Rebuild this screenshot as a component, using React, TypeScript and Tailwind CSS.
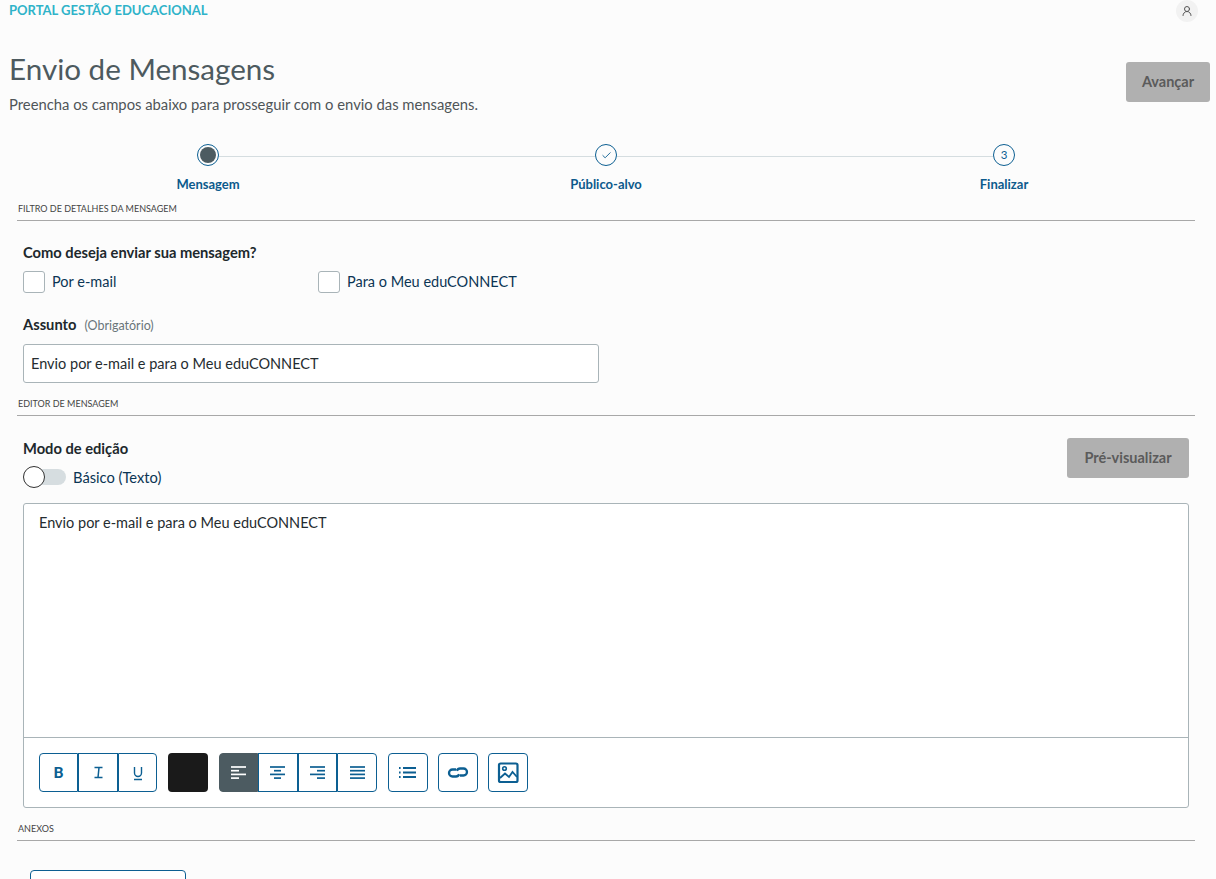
import { Check, UserRound } from "lucide-react";
import type { ReactNode } from "react";

const font = { fontFamily: 'Lato, "Noto Sans", sans-serif' };

function SectionTitle({ children }: { children: ReactNode }) {
  return (
    <div className="ml-[17px] mr-[21px] border-b border-[#a8a8a8] pb-[5px] pl-px text-[9px] leading-[12px] text-[#444]">
      {children}
    </div>
  );
}

function Step({ label, children, line }: { label: string; children: ReactNode; line?: boolean }) {
  return (
    <div className="relative flex w-[398px] flex-col items-center">
      {line && <div className="absolute left-1/2 top-[12px] h-px w-[398px] bg-[#d5dde0]" />}
      <div className="relative z-10 grid h-[22px] w-[22px] place-items-center rounded-full border border-[#0c5f92] bg-[#fcfcfc] text-[11.5px] text-[#0c5f92]">
        {children}
      </div>
      <div className="mt-[10px] text-[13px] font-bold leading-[16px] text-[#0c5a8c]">{label}</div>
    </div>
  );
}

function CheckItem({ label, className }: { label: string; className: string }) {
  return (
    <label className={`flex items-center gap-[7px] ${className}`}>
      <span className="h-[22px] w-[22px] rounded-[3px] border border-[#a9b4b8] bg-white" />
      <span className="text-[14.5px] leading-[20px] text-[#0b3554]">{label}</span>
    </label>
  );
}

function ToolBtn({ children, className = "w-[40px]" }: { children: ReactNode; className?: string }) {
  return (
    <button className={`grid h-[39px] place-items-center border border-[#0c5f92] bg-white text-[#0c5f92] ${className}`}>
      {children}
    </button>
  );
}

// toolbar glyphs share one 40x39 grid so they sit where the reference has them
function Glyph({ children }: { children: ReactNode }) {
  return (
    <svg className="-m-px" width="40" height="39" viewBox="0 0 40 39" fill="none" stroke="currentColor" strokeWidth="1.7">
      {children}
    </svg>
  );
}

function Lines({ rows }: { rows: [number, number][] }) {
  return (
    <Glyph>
      {rows.map(([x1, x2], i) => (
        <line key={i} x1={x1} x2={x2} y1={14 + i * 3.7} y2={14 + i * 3.7} />
      ))}
    </Glyph>
  );
}

export default function App() {
  return (
    <div className="h-[879px] overflow-hidden bg-[#fcfcfc]" style={font}>
      <header className="flex h-[22px] items-center justify-between pl-[9px] pr-[18px]">
        <span className="text-[13px] font-bold text-[#2fb3c9]">PORTAL GESTÃO EDUCACIONAL</span>
        <span className="grid h-[22px] w-[22px] place-items-center rounded-full bg-[#f2f2f2] text-[#555]">
          <UserRound size={12} />
        </span>
      </header>

      <div className="mt-[29px] flex items-start justify-between pl-[9px] pr-[6px]">
        <div>
          <h1 className="text-[29.6px] leading-[36px] text-[#4d5a5f]">Envio de Mensagens</h1>
          <p className="mt-[7px] text-[14.8px] leading-[20px] text-[#4f5558]">
            Preencha os campos abaixo para prosseguir com o envio das mensagens.
          </p>
        </div>
        <button className="mt-[11px] h-[40px] w-[84px] rounded-[3px] bg-[#b0b0b0] text-[14.5px] font-bold text-[#5b5b5b]">
          Avançar
        </button>
      </div>

      <div className="mt-[30px] flex pl-[9px]">
        <Step label="Mensagem" line>
          <span className="h-[16px] w-[16px] rounded-full bg-[#4c5b61]" />
        </Step>
        <Step label="Público-alvo" line>
          <Check size={11} strokeWidth={2} />
        </Step>
        <Step label="Finalizar">3</Step>
      </div>

      <div className="mt-[11px]">
        <SectionTitle>FILTRO DE DETALHES DA MENSAGEM</SectionTitle>
      </div>

      <div className="pl-[23px]">
        <div className="mt-[21px] text-[14.7px] font-bold leading-[20px] text-[#20282c]">Como deseja enviar sua mensagem?</div>
        <div className="mt-[9px] flex">
          <CheckItem label="Por e-mail" className="w-[295px]" />
          <CheckItem label="Para o Meu eduCONNECT" className="" />
        </div>
        <div className="mt-[21px] flex items-baseline gap-[8px] leading-[20px]">
          <span className="text-[14.7px] font-bold text-[#20282c]">Assunto</span>
          <span className="text-[12.5px] text-[#69757a]">(Obrigatório)</span>
        </div>
        <div className="mt-[8px] flex h-[39px] w-[576px] items-center rounded-[3px] border border-[#a9b4b8] bg-white pl-[7px] text-[14.5px] text-[#252c30]">
          Envio por e-mail e para o Meu eduCONNECT
        </div>
      </div>

      <div className="mt-[15px]">
        <SectionTitle>EDITOR DE MENSAGEM</SectionTitle>
      </div>

      <div className="mt-[22px] flex items-start justify-between pl-[23px] pr-[27px]">
        <div>
          <div className="text-[14.7px] font-bold leading-[20px] text-[#20282c]">Modo de edição</div>
          <div className="mt-[8px] flex h-[22px] items-center gap-[7px]">
            <span className="relative h-[16px] w-[43px] rounded-full bg-[#d6dde0]">
              <span className="absolute left-0 top-[-3px] h-[22px] w-[22px] rounded-full border border-[#333] bg-white" />
            </span>
            <span className="text-[14.7px] leading-[20px] text-[#0b3554]">Básico (Texto)</span>
          </div>
        </div>
        <button className="h-[40px] w-[122px] rounded-[3px] bg-[#b0b0b0] text-[14.5px] font-bold text-[#5b5b5b]">
          Pré-visualizar
        </button>
      </div>

      <div className="ml-[23px] mr-[27px] mt-[15px] h-[305px] rounded-[3px] border border-[#a9b4b8] bg-white">
        <div className="h-[234px] border-b border-[#a9b4b8] pl-[15px] pt-[9px] text-[14.5px] leading-[20px] text-[#252c30]">
          Envio por e-mail e para o Meu eduCONNECT
        </div>
        <div className="flex pl-[15px] pt-[15px]">
          <div className="flex">
            <ToolBtn className="w-[39px] rounded-l-[4px] text-[15px] font-black">B</ToolBtn>
            <ToolBtn className="w-[40px]">
              <Glyph>
                <path d="M16.5 14.5h8M16.5 24.5h8M21 14.5l-1 10" strokeWidth="1.5" />
              </Glyph>
            </ToolBtn>
            <ToolBtn className="w-[39px] rounded-r-[4px]">
              <Glyph>
                <path d="M16.5 14v6a3.5 3.5 0 0 0 7 0v-6M16 26.5h8" strokeWidth="1.4" />
              </Glyph>
            </ToolBtn>
          </div>
          <div className="ml-[11px] h-[39px] w-[40px] rounded-[4px] bg-[#1a1a1a]" />
          <div className="ml-[11px] flex">
            <ToolBtn className="w-[39px] rounded-l-[4px] !border-[#4c5b61] !bg-[#4c5b61] !text-white">
              <Lines rows={[[12, 27], [12, 20], [12, 27], [12, 20]]} />
            </ToolBtn>
            <ToolBtn className="w-[40px]">
              <Lines rows={[[12, 27], [16, 23], [12, 27], [16, 23]]} />
            </ToolBtn>
            <ToolBtn className="w-[39px]">
              <Lines rows={[[12, 27], [19, 27], [12, 27], [19, 27]]} />
            </ToolBtn>
            <ToolBtn className="w-[40px] rounded-r-[4px]">
              <Lines rows={[[13, 28], [13, 28], [13, 28], [13, 28]]} />
            </ToolBtn>
          </div>
          <ToolBtn className="ml-[11px] w-[40px] rounded-[4px]">
            <Glyph>
              <path d="M15 15h13M15 19.5h13M15 24h13" strokeWidth="1.8" />
              <path d="M11 15h1.6M11 19.5h1.6M11 24h1.6" strokeWidth="1.8" />
            </Glyph>
          </ToolBtn>
          <ToolBtn className="ml-[10px] w-[40px] rounded-[4px]">
            <Glyph>
              <path d="M18 16.5h-3.5a3.5 3.5 0 0 0 0 7H18a3.5 3.5 0 0 0 3.2-2.2M22 22.5h3.5a3.5 3.5 0 0 0 0-7H22a3.5 3.5 0 0 0-3.2 2.2" strokeWidth="2.3" />
            </Glyph>
          </ToolBtn>
          <ToolBtn className="ml-[10px] w-[40px] rounded-[4px]">
            <Glyph>
              <rect x="11" y="10.5" width="18.5" height="18.5" rx="1.5" strokeWidth="2.2" />
              <circle cx="16.5" cy="15.5" r="1.8" strokeWidth="1.6" />
              <path d="M12 25l5-4.5 4 3.5 3.5-5 4.5 5" strokeWidth="1.8" />
            </Glyph>
          </ToolBtn>
        </div>
      </div>

      <div className="mt-[15px]">
        <SectionTitle>ANEXOS</SectionTitle>
      </div>

      <button className="ml-[30px] mt-[29px] h-[40px] w-[156px] rounded-[4px] border border-[#0c5f92] bg-white" />
    </div>
  );
}
